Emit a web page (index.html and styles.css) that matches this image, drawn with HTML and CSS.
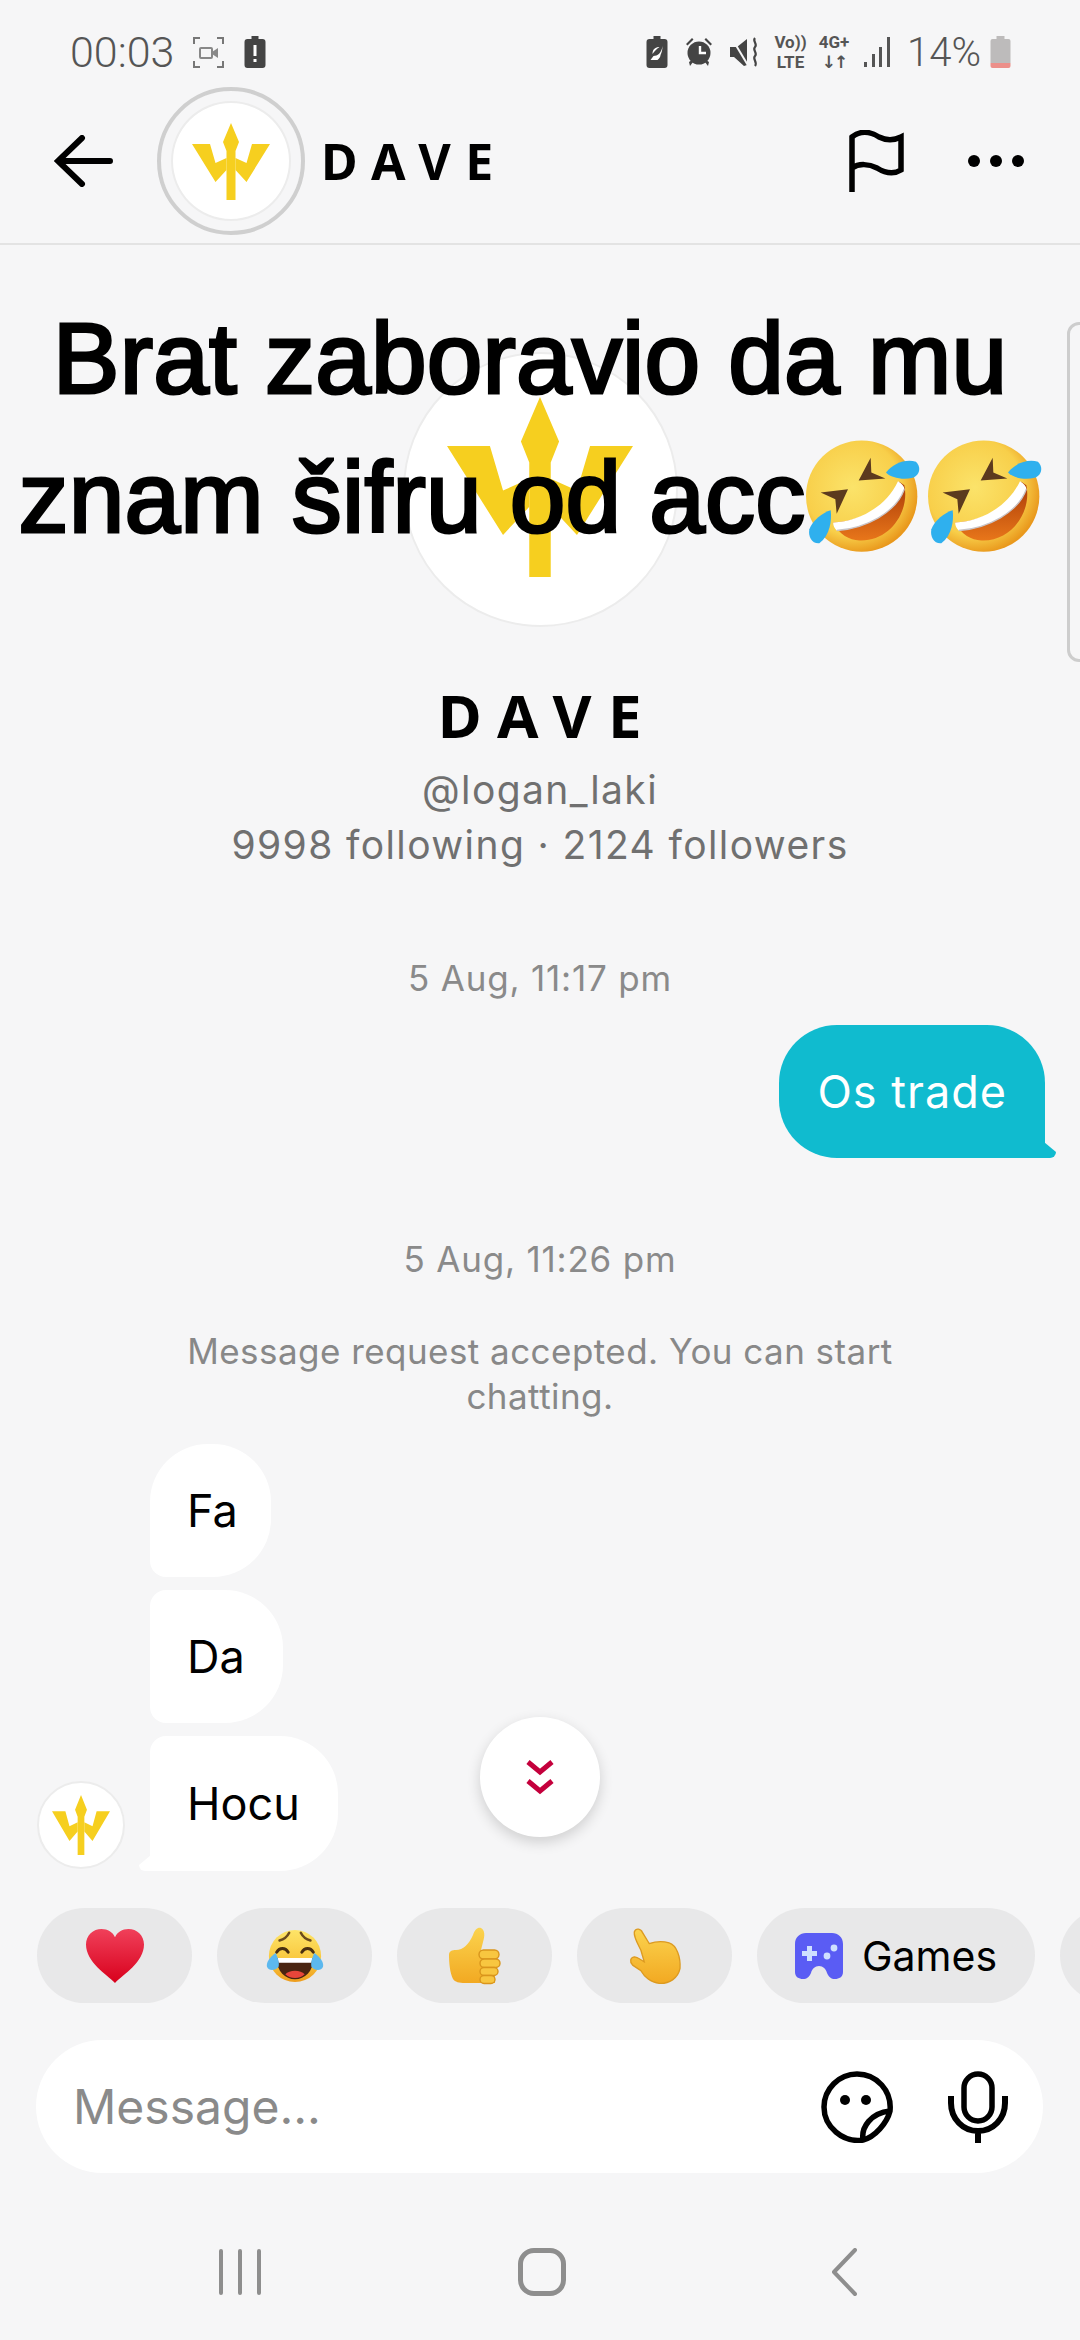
FILE: index.html
```html
<!DOCTYPE html>
<html lang="en">
  <head>
    <meta charset="UTF-8" />
    <meta name="viewport" content="width=device-width, initial-scale=1.0" />
    <title>DAVE</title>
    <link rel="stylesheet" href="styles.css">
  </head>
  <body>
    <!-- shared drawings -->
    <svg class="sprite" width="0" height="0" aria-hidden="true">
      <defs>
        <linearGradient id="faceGrad" x1="0" y1="0" x2="0" y2="1">
          <stop offset="0" stop-color="#fde468" />
          <stop offset="0.6" stop-color="#f9c63c" />
          <stop offset="1" stop-color="#ee9c1c" />
        </linearGradient>
        <radialGradient id="roflGrad" cx="0.42" cy="0.42" r="0.6">
          <stop offset="0" stop-color="#fbe36a" />
          <stop offset="0.72" stop-color="#f8cf4a" />
          <stop offset="1" stop-color="#e9981c" />
        </radialGradient>
        <linearGradient id="mouthGrad" x1="0" y1="0" x2="0" y2="1">
          <stop offset="0" stop-color="#a93a08" />
          <stop offset="1" stop-color="#e8761a" />
        </linearGradient>
        <linearGradient id="heartGrad" x1="0" y1="0" x2="0" y2="1">
          <stop offset="0" stop-color="#f0405a" />
          <stop offset="1" stop-color="#d8001c" />
        </linearGradient>
        <linearGradient id="handGrad" x1="0" y1="0" x2="0" y2="1">
          <stop offset="0" stop-color="#fbd34e" />
          <stop offset="1" stop-color="#f2a922" />
        </linearGradient>
        <symbol id="trident" viewBox="0 0 78 77" preserveAspectRatio="none">
          <path fill="#f6cf1f" d="M39 0 L47 19 L43.5 28 V77 H34.5 V28 L31 19 Z" />
          <path fill="#f6cf1f" d="M0 21 H18 L23.5 40 L34.5 35 V47 L23.5 59 Z" />
          <path fill="#f6cf1f" d="M78 21 H60 L54.5 40 L43.5 35 V47 L54.5 59 Z" />
        </symbol>
        <symbol id="rofl" viewBox="30 15 342 335">
          <circle cx="197" cy="183" r="167" fill="url(#roflGrad)" />
          <path fill="url(#mouthGrad)" d="M325 150 C342 230 280 320 190 316 C160 314 130 300 112 262 C190 258 280 220 310 140 Z" />
          <path fill="#fff" d="M306 138 C318 145 326 155 325 162 C300 232 210 280 122 286 C116 280 110 270 112 262 C190 258 270 215 306 138 Z" />
          <path fill="none" stroke="#c9c5c8" stroke-width="4" d="M325 162 C300 232 210 280 122 286" />
          <path fill="#5c3a1e" d="M224 68 L188 136 L268 130 L226 112 Z" />
          <path fill="#5c3a1e" d="M74 172 L156 162 L122 236 L118 192 Z" />
          <path fill="#2fb0ee" d="M270 112 C290 85 330 70 360 80 C376 95 372 120 350 128 C320 135 285 128 270 112 Z" />
          <path fill="#2fb0ee" d="M104 225 C108 255 102 300 70 324 C48 326 36 305 40 282 C50 255 80 232 104 225 Z" />
        </symbol>
      </defs>
    </svg>

    <div class="screen">
      <!-- status bar -->
      <div class="statusbar">
        <span class="clock">00:03</span>
        <svg class="st-rec" viewBox="0 0 31 31">
          <path fill="none" stroke="#777" stroke-width="2" d="M1 7 V1 H7 M24 1 H30 V7 M30 24 V30 H24 M7 30 H1 V24" />
          <rect x="7" y="11" width="12" height="10" rx="1" fill="none" stroke="#888" stroke-width="2" />
          <path fill="#888" d="M19 15 L25 11 V21 L19 17 Z" />
        </svg>
        <svg class="st-batt" viewBox="0 0 21 32">
          <path fill="#444" d="M7 0 H14 V3 H18 Q21 3 21 6 V29 Q21 32 18 32 H3 Q0 32 0 29 V6 Q0 3 3 3 H7 Z" />
          <rect x="9" y="9" width="3" height="11" fill="#fff" />
          <rect x="9" y="23" width="3" height="3" fill="#fff" />
        </svg>
        <div class="status-right">
          <svg class="st-batt" viewBox="0 0 21 32">
            <path fill="#444" d="M7 0 H14 V3 H18 Q21 3 21 6 V29 Q21 32 18 32 H3 Q0 32 0 29 V6 Q0 3 3 3 H7 Z" />
            <path fill="#fff" d="M16 10 C15 17 11 20 7 20 L4 24 H11 C13 22 14 21 14 19 C15 17 16 14 16 10 Z M13 11 C9 11 6 13 6 18 C8 15 10 13 13 11 Z" />
          </svg>
          <svg class="st-alarm" viewBox="0 0 28 30">
            <path fill="#444" d="M1 7 L7 1 L8.5 2.5 L2.5 8.5 Z M27 7 L21 1 L19.5 2.5 L25.5 8.5 Z" />
            <circle cx="14" cy="16" r="11.5" fill="#444" />
            <path fill="#444" d="M4 25 L7 23 L8 25 L5 29 Z M24 25 L21 23 L20 25 L23 29 Z" />
            <path fill="none" stroke="#fff" stroke-width="2.4" d="M15 9 V16 H21" />
          </svg>
          <svg class="st-mute" viewBox="0 0 28 30">
            <path fill="#444" d="M0 10 H7 L17 2 V28 L14 29 L4 20 H0 Z" />
            <path stroke="#f6f6f7" stroke-width="2" d="M1 0 L19 30" />
            <path fill="none" stroke="#444" stroke-width="2.2" d="M25 1 C22 4 28 7 25 10 C22 13 28 16 25 19 C22 22 28 25 25 29" />
          </svg>
          <div class="st-stack"><span>Vo))</span><span>LTE</span></div>
          <div class="st-stack st-net"><span>4G+</span><span class="st-arrows">↓↑</span></div>
          <svg class="st-signal" viewBox="0 0 26 30">
            <rect x="0" y="25" width="3" height="5" fill="#555" />
            <rect x="8" y="17" width="3" height="13" fill="#555" />
            <rect x="15" y="10" width="3" height="20" fill="#555" />
            <rect x="23" y="0" width="3" height="30" fill="#555" />
          </svg>
          <span class="pct">14%</span>
          <svg class="st-low" viewBox="0 0 20 32">
            <path fill="#bdbbbb" d="M6 0 H14 V3 H18 Q20 3 20 5 V27 H0 V5 Q0 3 2 3 H6 Z" />
            <path fill="#ec8f8a" d="M0 27 H20 V30 Q20 32 18 32 H2 Q0 32 0 30 Z" />
          </svg>
        </div>
      </div>

      <!-- header -->
      <div class="topbar">
        <svg class="back-icon" viewBox="0 0 58 52">
          <path fill="none" stroke="#000" stroke-width="6" stroke-linecap="round" d="M55 26 H4 M27 3 L3 26 L27 49" />
        </svg>
        <div class="top-avatar">
          <svg class="top-trident"><use href="#trident" /></svg>
        </div>
        <div class="top-name">DAVE</div>
        <svg class="flag-icon" viewBox="0 0 55 62">
          <path fill="none" stroke="#000" stroke-width="5.5" d="M3 62 V7 C12 0 22 2 30 7 C38 11 46 10 52 7 V40 C44 45 36 43 28 38 C20 34 10 33 3 38" />
        </svg>
        <div class="more-dots"><i></i><i></i><i></i></div>
      </div>

      <!-- chat -->
      <div class="chat">
        <div class="overlay-title">
          <div>Brat zaboravio da mu</div>
          <div>znam šifru od acc<svg class="rofl"><use href="#rofl" /></svg><svg class="rofl"><use href="#rofl" /></svg></div>
        </div>
        <div class="side-card"></div>

        <div class="profile">
          <div class="big-avatar">
            <svg class="big-trident"><use href="#trident" /></svg>
          </div>
          <div class="profile-name">DAVE</div>
          <div class="profile-meta">@logan_laki</div>
          <div class="profile-meta">9998 following · 2124 followers</div>
        </div>

        <div class="stamp stamp-first">5 Aug, 11:17 pm</div>
        <div class="row-me">
          <div class="bubble bubble-me">Os trade</div>
        </div>

        <div class="stamp stamp-second">5 Aug, 11:26 pm</div>
        <div class="system-msg">Message request accepted. You can start<br>chatting.</div>

        <div class="row-them">
          <div class="small-avatar">
            <svg class="small-trident"><use href="#trident" /></svg>
          </div>
          <div class="them-stack">
            <div class="bubble bubble-them first">Fa</div>
            <div class="bubble bubble-them">Da</div>
            <div class="bubble bubble-them last">Hocu</div>
          </div>
        </div>

        <div class="scroll-down">
          <svg viewBox="0 0 28 36" class="chevrons">
            <path fill="none" stroke="#c4003c" stroke-width="5" d="M2 3 L14 13 L26 3 M2 22 L14 32 L26 22" />
          </svg>
        </div>
      </div>

      <!-- quick replies -->
      <div class="chips">
        <div class="chip">
          <svg class="emo" viewBox="0 0 56 52">
            <path fill="url(#heartGrad)" d="M28 52 C20 44 0 32 0 15 C0 6 7 0 15 0 C21 0 26 3 28 8 C30 3 35 0 41 0 C49 0 56 6 56 15 C56 32 36 44 28 52 Z" />
          </svg>
        </div>
        <div class="chip">
          <svg class="emo" viewBox="0 0 60 60">
            <circle cx="30" cy="30" r="27" fill="url(#faceGrad)" />
            <path fill="none" stroke="#6b4a1c" stroke-width="2.6" stroke-linecap="round" d="M14 14 C18 13 22 10 24 6 M46 14 C42 13 38 10 36 6" />
            <path fill="none" stroke="#4a2f10" stroke-width="3" stroke-linecap="round" d="M11 26 C14 21 20 21 23 26 M37 26 C40 21 46 21 49 26" />
            <path fill="#4a2410" d="M11 32 H49 C49 46 40 54 30 54 C20 54 11 46 11 32 Z" />
            <path fill="#fff" d="M12 32 H48 L47 37 H13 Z" />
            <path fill="#e8463a" d="M20 49 C24 44 36 44 40 49 C36 54 24 54 20 49 Z" />
            <path fill="#5cb8ee" d="M10 27 C4 31 0 37 1 41 C3 46 10 45 13 41 C14 37 12 31 10 27 Z" />
            <path fill="#5cb8ee" d="M50 27 C56 31 60 37 59 41 C57 46 50 45 47 41 C46 37 48 31 50 27 Z" />
          </svg>
        </div>
        <div class="chip">
          <svg class="emo" viewBox="0 0 52 58">
            <path fill="url(#handGrad)" d="M0 28 C0 24 3 23 7 23 C14 23 20 17 24 8 C26 2 29 0 32 1 C36 3 36 9 34 15 L32 23 H46 V56 H16 C10 56 6 55 4 52 C1 46 0 36 0 28 Z" />
            <g fill="#f8c640" stroke="#d9951c" stroke-width="1.4">
              <rect x="30" y="23" width="20" height="9" rx="4.5" />
              <rect x="31" y="32" width="20" height="8.5" rx="4.2" />
              <rect x="31" y="40.5" width="18" height="8" rx="4" />
              <rect x="31" y="48.5" width="15" height="8" rx="4" />
            </g>
          </svg>
        </div>
        <div class="chip">
          <svg class="emo" viewBox="110 80 165 175">
            <path fill="url(#handGrad)" stroke="#dc9a20" stroke-width="4" d="M130 95 C135 82 150 85 155 97 L175 130 C190 125 215 122 235 128 C258 135 270 170 268 205 C262 235 235 252 205 250 C180 248 160 230 150 212 L125 195 C115 185 118 172 130 170 C140 170 150 180 160 185 L150 150 C140 130 128 110 130 95 Z" />
          </svg>
        </div>
        <div class="chip chip-label">
          <svg class="games-icon" viewBox="0 0 48 46">
            <path fill="#5a5cf4" d="M11 0 H37 C43 0 48 4 48 11 V39 C48 44 44 46 40 46 C36 46 34 44 32 40 C31 36 28 33 24 33 C20 33 17 36 16 40 C14 44 12 46 8 46 C4 46 0 44 0 39 V11 C0 4 5 0 11 0 Z" />
            <path fill="#cfe0ff" d="M12 13 H17 V18 H22 V23 H17 V28 H12 V23 H7 V18 H12 Z" />
            <circle cx="39" cy="15" r="3.4" fill="#cfe0ff" />
            <circle cx="32" cy="23" r="3.4" fill="#cfe0ff" />
          </svg>
          <span>Games</span>
        </div>
        <div class="chip"></div>
      </div>

      <!-- message box -->
      <div class="composer">
        <span class="composer-hint">Message...</span>
        <svg class="sticker-icon" viewBox="0 0 72 72">
          <path fill="none" stroke="#000" stroke-width="5.5" stroke-linejoin="round" d="M42 69 C22 72 3 56 3 36 C3 18 18 3 36 3 C56 3 71 20 69 40 C66 52 54 66 42 69 C40 56 50 42 69 40" />
          <circle cx="24" cy="29" r="5" fill="#000" />
          <circle cx="45" cy="29" r="5" fill="#000" />
        </svg>
        <svg class="mic-icon" viewBox="0 0 60 72">
          <rect x="16" y="3" width="28" height="47" rx="14" fill="none" stroke="#000" stroke-width="5.5" />
          <path fill="none" stroke="#000" stroke-width="6" d="M3 25 V32 C3 48 15 60 30 60 C45 60 57 48 57 32 V25 M30 60 V72" />
        </svg>
      </div>

      <!-- android nav -->
      <div class="navbar">
        <div class="nav-slot">
          <svg class="nav-recents" viewBox="0 0 44 48">
            <path stroke="#8e8e8e" stroke-width="4" stroke-linecap="round" d="M3 3 V45 M22 3 V45 M41 3 V45" />
          </svg>
        </div>
        <div class="nav-slot">
          <div class="nav-home"></div>
        </div>
        <div class="nav-slot">
          <svg class="nav-back" viewBox="0 0 26 48">
            <path fill="none" stroke="#8e8e8e" stroke-width="4" stroke-linecap="round" stroke-linejoin="round" d="M24 2 L3 24 L24 46" />
          </svg>
        </div>
      </div>
    </div>
  </body>
</html>
```

FILE: styles.css
```css
* {
  box-sizing: border-box;
  margin: 0;
  padding: 0;
}

body {
  width: 1080px;
  height: 2340px;
  overflow: hidden;
  background: #f6f6f7;
  font-family: "Inter", "Liberation Sans", sans-serif;
  color: #000;
}

.sprite {
  position: absolute;
}

.screen {
  width: 1080px;
  height: 2340px;
  display: flex;
  flex-direction: column;
}

/* status bar */
.statusbar {
  height: 81px;
  padding: 23px 69px 0 70px;
  display: flex;
  align-items: center;
  color: #555;
}

.clock {
  font-family: "Roboto", sans-serif;
  font-weight: 300;
  font-size: 43px;
  width: 123px;
}

.st-rec {
  width: 31px;
  height: 31px;
  margin-right: 20px;
}

.st-batt {
  width: 22px;
  height: 32px;
}

.status-right {
  margin-left: auto;
  display: flex;
  align-items: center;
  gap: 17px;
}

.st-alarm {
  width: 28px;
  height: 30px;
}

.st-mute {
  width: 28px;
  height: 30px;
}

.st-stack {
  display: flex;
  flex-direction: column;
  align-items: center;
  font-family: "Roboto", sans-serif;
  font-weight: 700;
  font-size: 17px;
  line-height: 20px;
  color: #555;
  width: 31px;
}

.st-net {
  width: 32px;
  margin-left: -5px;
}

.st-arrows {
  font-family: "DejaVu Sans", sans-serif;
  font-size: 17px;
  letter-spacing: -2px;
}

.st-signal {
  width: 28px;
  height: 30px;
  margin-left: -4px;
}

.pct {
  font-family: "Roboto", sans-serif;
  font-weight: 300;
  font-size: 40px;
  width: 74px;
  margin-left: -1px;
  margin-right: -8px;
  white-space: nowrap;
}

.st-low {
  width: 21px;
  height: 32px;
}

/* header */
.topbar {
  height: 164px;
  padding: 0 56px 2px 54px;
  border-bottom: 2px solid #e3e3e3;
  display: flex;
  align-items: center;
}

.back-icon {
  width: 60px;
  height: 52px;
  margin-right: 43px;
}

.top-avatar {
  flex: none;
  width: 148px;
  height: 148px;
  border-radius: 50%;
  background: #fff;
  border: 4px solid #cfcfcf;
  box-shadow: inset 0 0 0 10px #f6f6f7, inset 0 0 0 12px #ececec;
  display: flex;
  align-items: center;
  justify-content: center;
  margin-right: 19px;
}

.top-trident {
  width: 78px;
  height: 77px;
}

.top-name {
  font-family: "Noto Sans", sans-serif;
  font-weight: 700;
  font-size: 50px;
  letter-spacing: 14.5px;
  margin-left: -3px;
}

.flag-icon {
  width: 57px;
  height: 62px;
  margin-left: auto;
  margin-right: 63px;
}

.more-dots {
  display: flex;
  gap: 10px;
}

.more-dots i {
  width: 12px;
  height: 12px;
  border-radius: 50%;
  background: #000;
}

/* chat */
.chat {
  flex: 1;
  position: relative;
  display: flex;
  flex-direction: column;
}

.overlay-title {
  position: absolute;
  z-index: 2;
  top: 44px;
  left: 0;
  width: 1060px;
  text-align: center;
  white-space: nowrap;
  font-family: "Liberation Sans", sans-serif;
  font-size: 100px;
  line-height: 139px;
  letter-spacing: 0.2px;
  -webkit-text-stroke: 3px #000;
}

.rofl {
  width: 114px;
  height: 112px;
  vertical-align: -20px;
}

.rofl + .rofl {
  margin-left: 8px;
}

.side-card {
  position: absolute;
  top: 77px;
  right: -20px;
  width: 33px;
  height: 340px;
  border: 3px solid #cdcdcd;
  border-radius: 12px;
}

.profile {
  padding-top: 107px;
  display: flex;
  flex-direction: column;
  align-items: center;
}

.big-avatar {
  width: 275px;
  height: 275px;
  border-radius: 50%;
  background: #fff;
  border: 2px solid #ececec;
  display: flex;
  align-items: center;
  justify-content: center;
}

.big-trident {
  width: 186px;
  height: 180px;
  margin-top: -6px;
}

.profile-name {
  font-family: "Noto Sans", sans-serif;
  font-weight: 700;
  font-size: 60px;
  line-height: 60px;
  letter-spacing: 16.5px;
  margin-top: 58px;
  margin-bottom: 17px;
  padding-left: 16px;
}

.profile-meta {
  font-size: 39px;
  line-height: 55px;
  letter-spacing: 1.4px;
  color: #707070;
}

.stamp {
  text-align: center;
  font-size: 35px;
  line-height: 44px;
  letter-spacing: 0.8px;
  color: #8a8a8a;
}

.stamp-first {
  margin-top: 84px;
}

.stamp-second {
  margin-top: 79px;
}

.row-me {
  margin-top: 25px;
  padding-right: 35px;
  display: flex;
  justify-content: flex-end;
}

.bubble {
  position: relative;
  height: 133px;
  padding: 0 38px;
  display: flex;
  align-items: center;
  font-size: 45px;
}

.bubble-me {
  background: #10bbcf;
  color: #fff;
  letter-spacing: 1px;
  border-radius: 58px 58px 0 58px;
}

.bubble-me::after {
  content: "";
  position: absolute;
  right: -11px;
  bottom: 0;
  width: 12px;
  height: 16px;
  background: #10bbcf;
  border-radius: 0 0 6px 0;
  clip-path: polygon(0 0, 100% 62%, 100% 100%, 0 100%);
}

.system-msg {
  margin-top: 48px;
  text-align: center;
  font-size: 35px;
  line-height: 45px;
  letter-spacing: 0.45px;
  color: #888;
}

.row-them {
  margin-top: 25px;
  padding-left: 37px;
  display: flex;
  align-items: flex-end;
  gap: 25px;
}

.small-avatar {
  width: 88px;
  height: 88px;
  border-radius: 50%;
  background: #fff;
  border: 2px solid #ececec;
  margin-bottom: 2px;
  display: flex;
  align-items: center;
  justify-content: center;
}

.small-trident {
  width: 58px;
  height: 60px;
}

.them-stack {
  display: flex;
  flex-direction: column;
  align-items: flex-start;
  gap: 13px;
}

.bubble-them {
  background: #fff;
  padding: 0 38px 0 37px;
  border-radius: 16px 58px 58px 16px;
}

.bubble-them.first {
  padding-right: 33px;
  border-radius: 58px 58px 58px 16px;
}

.bubble-them.last {
  height: 135px;
  border-radius: 16px 58px 58px 0;
}

.bubble-them.last::after {
  content: "";
  position: absolute;
  left: -11px;
  bottom: 0;
  width: 12px;
  height: 16px;
  background: #fff;
  border-radius: 0 0 0 6px;
  clip-path: polygon(0 62%, 100% 0, 100% 100%, 0 100%);
}

.scroll-down {
  position: absolute;
  top: 1472px;
  left: 480px;
  width: 120px;
  height: 120px;
  border-radius: 50%;
  background: #fff;
  box-shadow: 0 5px 14px rgba(0, 0, 0, 0.16);
  display: flex;
  align-items: center;
  justify-content: center;
}

.chevrons {
  width: 28px;
  height: 36px;
}

/* quick replies */
.chips {
  padding-left: 37px;
  display: flex;
  gap: 25px;
  overflow: hidden;
}

.chip {
  flex: none;
  width: 155px;
  height: 95px;
  border-radius: 48px;
  background: #e8e8e9;
  display: flex;
  align-items: center;
  justify-content: center;
}

.emo {
  width: 58px;
  height: 58px;
}

.chip-label {
  width: 278px;
  gap: 19px;
  font-size: 41px;
}

.games-icon {
  width: 48px;
  height: 46px;
}

/* message box */
.composer {
  height: 133px;
  margin: 37px 37px 0 36px;
  padding: 0 35px 0 37px;
  border-radius: 67px;
  background: #fff;
  display: flex;
  align-items: center;
}

.composer-hint {
  font-size: 48px;
  color: #8a8a8a;
}

.sticker-icon {
  width: 72px;
  height: 72px;
  margin-left: auto;
  margin-right: 55px;
}

.mic-icon {
  width: 60px;
  height: 72px;
}

/* android nav */
.navbar {
  height: 167px;
  padding: 75px 0 0 4px;
  display: flex;
  justify-content: center;
}

.nav-slot {
  width: 302px;
  display: flex;
  justify-content: center;
}

.nav-recents {
  width: 44px;
  height: 48px;
}

.nav-home {
  width: 48px;
  height: 48px;
  border: 5px solid #8e8e8e;
  border-radius: 16px;
}

.nav-back {
  width: 26px;
  height: 48px;
}
```
